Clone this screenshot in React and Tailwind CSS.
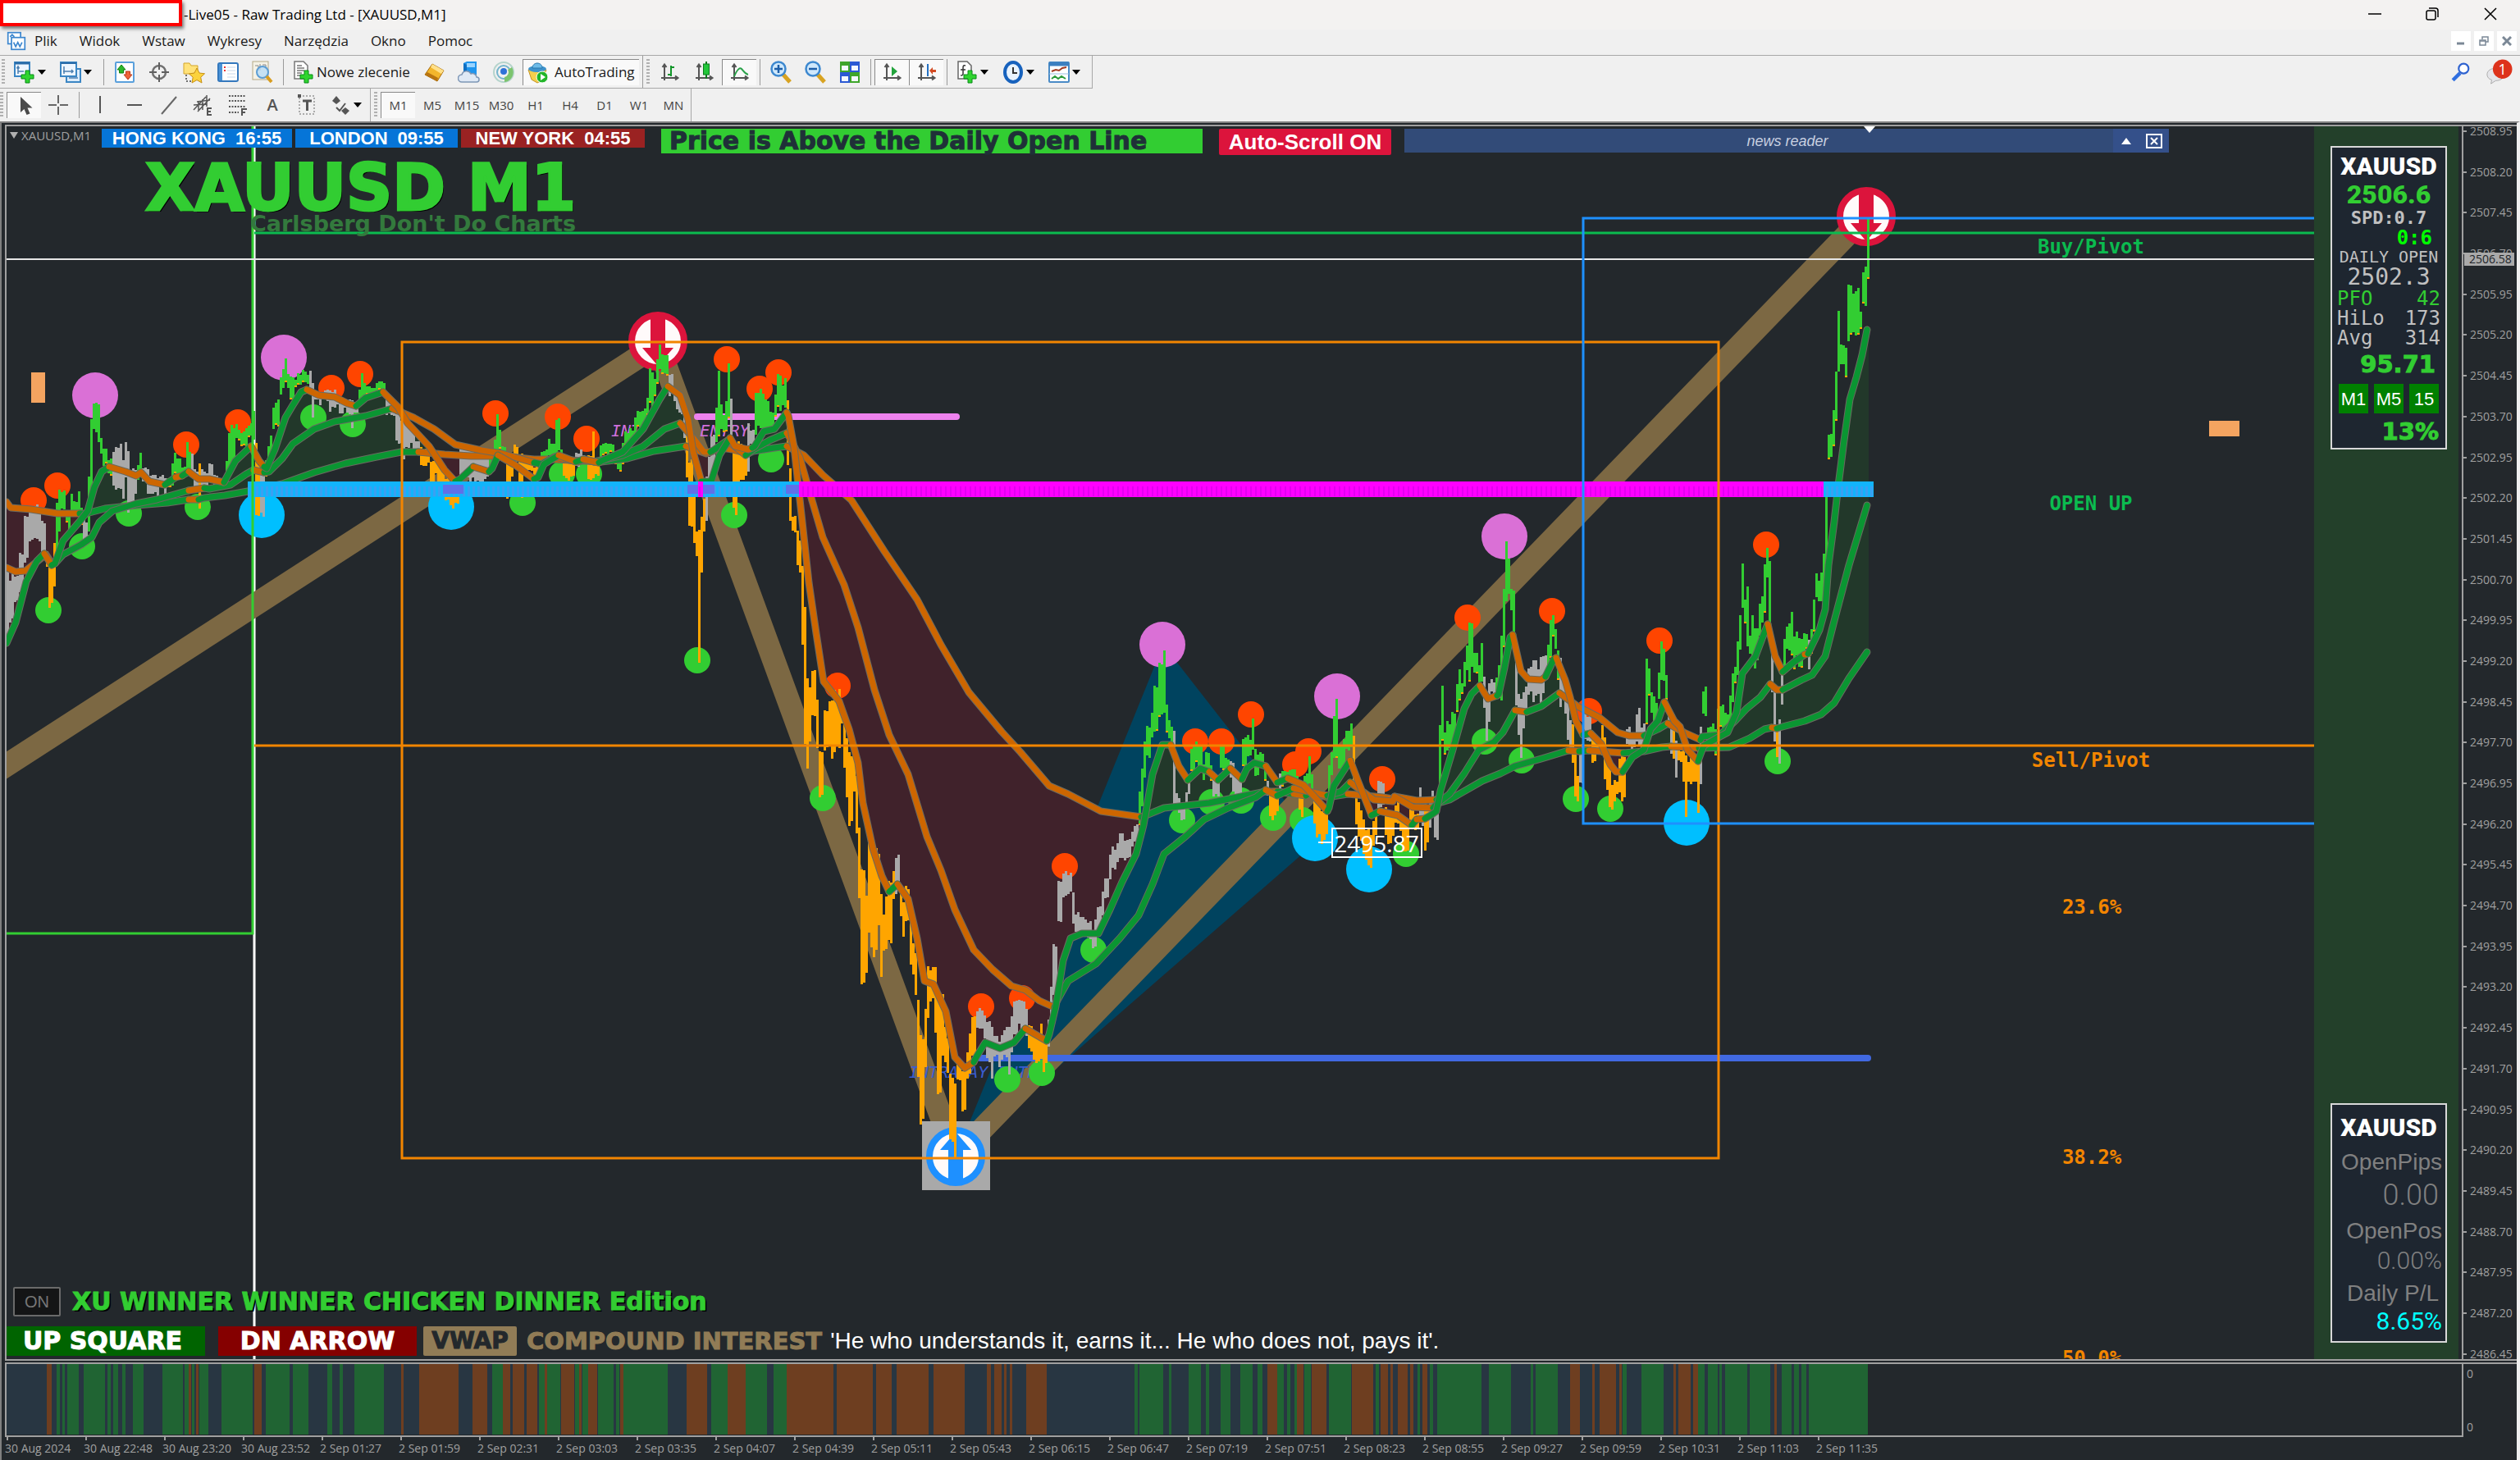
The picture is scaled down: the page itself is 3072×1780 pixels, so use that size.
import React from "react";

/* ------------------------------------------------------------------ data */

const COLORS = { w: "#a9a9a9", o: "#ffa500", g: "#32cd32" };
const MA_COLORS = { o: "#cd6600", g: "#0a9632" };

// Each session block has its own origin and unit size: [x0, y0, x unit, y unit]
const BLOCKS = {
  A: [0, 380, 0.6378, 0.3571],
  B: [900, 400, 0.574, 0.6888],
  C: [1700, 600, 0.4464, 0.3571],
  D: [1300, 140, 1.13, 0.3333],
};

function parse(rows) {
  const out = [];
  rows.forEach(([block, text]) => {
    const [x0, y0, sx, sy] = BLOCKS[block];
    let tone = "g";
    text
      .trim()
      .split(/\s+/)
      .forEach((token) => {
        if (/^[wog]$/.test(token)) {
          tone = token;
          return;
        }
        const [x, ...ys] = token.split(",").map(Number);
        out.push([x0 + x * sx, ...ys.map((y) => y0 + y * sy), tone]);
      });
  });
  return out;
}

const PRICE_BARS = parse([
  ["A", `w 12,880,1120 22,900,1060 30,900,990 38,820,960 48,700,860 54,680,800 62,650,780 70,660,790 78,700,830 84,720,850
    o 88,810,880 92,850,1025 97,860,1010 101,790,935 104,860,900
    g 108,640,860 112,600,770 118,610,680 124,680,720 130,690,740 136,620,690 142,650,700 148,610,700 153,660,730
    w 156,690,780 160,680,790 164,720,800
    g 168,560,760 172,370,620 177,310,400 181,295,410 185,300,460 190,430,490 196,460,530 202,465,520 208,500,560
    w 213,480,600 220,450,620 226,450,600 232,500,650 238,450,580 244,480,690 250,540,660 256,530,630
    g 262,520,580 267,480,550 w 272,530,580 280,540,620 290,560,620 300,570,630 308,560,600 314,570,630
    g 320,570,600 328,520,590 334,480,560 340,500,560 348,530,560 355,450,560 360,480,550
    w 365,480,560 372,540,600 o 378,520,670 w 386,540,600 394,550,600 402,520,580 410,560,600 420,570,600 427,570,590
    g 430,500,570 436,400,540 444,390,530 450,380,430 455,400,440 460,410,460 466,400,460 472,390,430 478,380,420 482,340,450
    o 488,430,690 493,530,690 w 500,540,700
    g 505,500,560 510,460,530 516,420,490 522,320,400 528,300,390 534,220,290 540,200,260 544,165,240 550,210,260 556,220,300 562,230,260 570,210,250 580,200,245 586,210,250
    w 590,205,280 596,250,360 602,280,300 610,280,320 618,270,300 624,265,310 630,260,340 636,270,330 642,285,320 650,310,350 658,300,330 665,300,350 672,300,400 678,310,350
    g 684,260,320 690,215,300 696,240,290 702,250,285 710,260,280 718,240,270 726,240,265 732,240,270
    w 738,280,350 745,300,355 752,330,360 758,350,450 764,360,460 770,370,500 776,390,460 784,400,450 790,410,470 796,440,480
    o 802,460,530 810,470,530 818,480,520 824,500,600 832,500,560 838,520,590 845,540,600 852,560,650 858,600,660 865,630,675 872,600,660
    w 878,470,560 884,455,560 892,440,570 898,470,580 906,480,600 914,480,590 922,490,580 930,500,570
    g 938,490,550 944,440,540 948,345,480 954,400,470 960,460,500
    o 966,520,655 972,500,600 978,490,560 984,455,520 990,480,640 996,480,630 1003,500,560 1010,490,550 1020,530,560 1028,530,570
    g 1034,480,540 1040,470,520 1048,430,500 1055,450,500 1064,360,480 1070,470,500
    o 1075,490,570 1082,500,575 1090,510,570 1096,500,560 w 1100,480,530 1108,470,510 1116,490,520
    o 1125,490,580 1131,400,580 1138,500,560
    g 1146,450,520 1152,450,490 1160,450,500 1168,450,480 1174,480,520 1182,470,545 1190,440,520 1196,410,460 1204,400,450 1212,350,430 1218,330,400 1224,340,400 1230,330,390 1236,290,350 1243,200,320 1248,220,290 1254,150,260 1260,110,200 1266,150,215 1272,145,220
    w 1280,210,290 1286,270,310 1292,280,340 1298,290,350 1306,300,450
    o 1312,400,560 1318,500,740 1324,620,790 1328,720,830 1330,750,830 1334,750,1195 1338,700,890 1344,640,760
    w 1350,560,720 1354,480,620 1360,420,560
    g 1366,330,460 1370,200,420 1376,310,400 1382,350,420 1386,290,410 1390,165,360 w 1394,290,440
    o 1399,470,680 1404,440,700 1410,450,600 1418,450,590 1424,460,560 w 1430,380,540 1436,400,460
    g 1444,270,420 1450,265,400 1458,280,400 1464,290,410 1472,340,400 1480,280,370 1488,210,340 1494,240,330 1500,230,330`],
  ["B", `o 105,130,240 110,240,350 116,330,360 122,350,420 128,370,430 134,420,560 138,490,740 144,620,790 148,630,740 152,650,760 158,600,690 164,650,740 170,740,830 178,750,835 184,670,750 190,660,740 198,650,760 204,640,750 211,635,740 216,660,700 222,680,780 228,720,830 236,750,880 244,760,820 250,790,900 256,880,1010 262,960,1160 268,1000,1150 274,900,1070 280,910,1100 288,920,1110 294,930,1060 300,1000,1150 306,1030,1100 314,1000,1100 320,980,1090 326,960,1010
    w 332,930,1000 336,930,990
    o 342,990,1040 348,1010,1075 356,990,1050 364,1040,1130 370,1080,1150 376,1100,1180 382,1180,1330 388,1250,1410 394,1200,1310 400,1130,1230 406,1130,1190 412,1130,1190 418,1130,1250 424,1180,1360 430,1170,1290 436,1240,1300 442,1260,1320 448,1320,1440 454,1330,1440 460,1330,1465 466,1300,1330 472,1310,1395 478,1300,1390 484,1280,1330 490,1250,1330 498,1220,1290
    w 504,1210,1240 510,1205,1240 516,1205,1240 522,1215,1260 530,1220,1300 538,1240,1330 544,1250,1290 552,1260,1310 558,1250,1300 566,1240,1290 572,1230,1330 578,1210,1280 586,1190,1250 594,1190,1230 602,1185,1240 610,1205,1250
    o 618,1230,1280 624,1250,1300 632,1250,1300 640,1230,1300 646,1260,1320 652,1260,1300
    w 658,1220,1270 664,1170,1240 670,1090,1180 675,1040,1100 680,970,1050 686,960,1010 692,955,1010 698,970,1000 704,965,1000 710,1000,1060 718,1035,1070 726,1040,1070 734,1045,1070 742,1050,1080 750,1060,1100 756,1050,1100 764,1020,1060 772,990,1040 780,970,1010 788,930,980 796,920,960 804,910,950 810,890,940 818,905,940 826,905,940 834,890,920 842,880,910
    g 850,820,880 856,770,850 862,730,800 868,700,760 876,680,730 882,625,710 888,640,710 894,590,690 901,565,690 906,660,720 912,690,730 918,700,750
    w 922,710,850 928,820,850 936,830,860 942,840,870 948,820,850 956,790,830
    g 962,740,790 970,730,770 978,735,780 986,770,800 994,750,790 1000,770,800
    w 1006,780,830 1012,790,830 1018,800,830 g 1024,735,780 1030,730,790 1036,760,790 w 1042,765,800 1048,770,820 1056,790,830 1064,800,840
    g 1072,725,780 1078,720,760 1084,730,760 1089,685,750 1096,740,790 1102,750,790 1110,750,780 1118,770,800
    w 1124,800,830 o 1130,810,870 1136,820,870 1142,820,860 w 1146,790,820
    g 1152,785,810 1160,785,800 1168,780,800 1176,780,810 1184,790,820
    o 1190,810,850 1196,820,870 g 1203,790,830 1209,750,810 1214,790,820
    o 1220,820,880 1226,840,910 1232,840,900 1240,850,910 1248,850,900
    g 1254,770,840 1260,750,790 1264,690,770 1271,655,770 1276,740,780 1284,730,780 1292,710,750 1298,700,740
    o 1302,720,820 1308,820,880 1314,840,900 1320,850,910 1328,860,940 1334,880,950 1340,900,960 1348,870,920 1354,860,900
    w 1360,800,850 1366,800,850 o 1372,840,900 1380,860,910 1388,860,900 1396,840,880 1404,860,890 1412,870,930 1420,880,930 1430,840,890 1438,860,890
    w 1446,810,870 1452,830,880 o 1460,840,920 w 1466,840,890 1474,815,870 1480,840,905`],
  ["C", `g 118,790,1000 126,665,840 132,820,900 138,780,890 146,780,870 152,750,850 160,750,840 168,640,760 174,590,720 180,650,690 188,580,660 194,515,620 200,430,640 206,430,610 212,540,610 218,540,620 226,590,660 234,515,640
    w 240,620,740 246,690,850 252,710,860 258,650,780 264,630,690 270,650,690
    g 276,630,700 282,590,700 288,490,720 294,320,530 300,160,380 306,220,330 312,230,360 318,320,400 322,320,520
    w 328,500,730 334,690,830 340,700,900 346,700,910 352,680,800 358,660,760 366,600,690 372,600,680 380,580,710 388,600,700 396,570,720 404,560,680 410,560,620
    g 416,510,600 422,440,560 429,410,500 436,460,540 442,530,650
    w 448,550,740 454,600,700 460,640,760 468,700,850 474,780,880 o 482,780,930 488,890,1050 494,960,1055 500,970,1050
    w 508,860,1000 514,810,900 520,750,840 528,760,850 534,770,830
    o 540,830,930 546,840,920 554,840,880 562,790,900 568,830,1000 576,900,1010 582,950,1070 590,990,1085 598,980,1060 604,980,1040 610,900,1030 618,890,1050 624,900,1050
    w 630,800,870 636,790,870 644,840,880 650,830,870 658,760,860 664,740,870 670,800,870 676,790,850
    g 684,560,790 690,590,710 696,680,760 702,700,800 710,720,800 718,600,720 725,515,640 731,530,640 738,610,720
    w 744,730,800 750,800,900 756,780,860 o 762,810,920 w 768,850,970
    o 776,880,920 784,880,1000 790,890,1100 796,900,1125 802,910,1000 810,900,1000 818,900,990 825,880,1110
    w 832,800,1010 g 838,680,760 845,660,760 850,740,830 856,800,850 866,790,830 874,800,900 882,730,820 890,720,800 898,750,820 906,760,820 914,680,800 920,610,720 928,590,650 934,510,620 940,410,540 946,225,400 952,370,460 960,310,540 966,480,550 974,415,560 980,450,620 986,470,580 994,380,500 1000,340,450 1006,250,430 1013,185,290 1019,230,460
    w 1025,400,580 1031,550,700 1036,640,850 o 1041,780,920 w 1046,760,925 1052,660,850 1058,620,730
    g 1065,500,610 1072,450,540 1080,400,550 1087,500,620 1094,470,560 1102,490,590 1110,500,600 1118,480,560 1124,480,540 w 1130,500,610
    g 1136,470,560 1142,350,480 1148,280,360 1154,290,380 1160,270,370 1166,260,330 1172,200,400 1176,-20,260`],
  ["D", `g 822,1160,1260 826,1070,1210 829,920,1130 833,700,960 836,840,910 840,850,960 844,620,820 848,650,790 852,630,800 856,720,780 860,560,700 863,380,590`],
]);

const SLOW = parse([
  ["A", `o 12,650 20,668 60,675 110,690 152,688 g 165,690 200,672 260,660 320,652 360,642 o 380,640 g 390,635 430,628 500,605 540,588 600,550 660,518 720,495 767,480 800,478
    o 850,487 900,493 960,492 1020,505 1060,503 1150,512 g 1200,500 1250,475 1310,458 o 1350,485 1370,470 g 1380,465 o 1400,470 1430,485 g 1440,475 1480,465 1503,460`],
  ["B", `o 110,212 140,225 180,260 240,305 310,395 380,480 430,560 490,645 560,715 600,750 660,810 700,825 770,855 855,865 g 865,862 905,850 1000,840 1060,830 1120,820 o 1145,820 g 1180,825 o 1205,828 g 1215,822 o 1250,830 g 1295,825 o 1370,830 1390,834`],
  ["C", `o 0,1040 60,1052 115,1050 g 120,1060 150,1050 240,985 290,960 330,935 400,910 475,882 o 505,885 g 530,882 o 625,890 g 680,885 730,872 755,868 o 830,875 g 915,870 970,840 1010,810 1030,805 o 1045,806 g 1060,802 1120,780 1165,760 1200,720 1240,635 1290,545`],
]);

const MEDIUM = parse([
  ["A", `o 12,875 30,888 48,885 88,830 98,860 g 105,860 120,830 155,795 175,770 190,720 215,680 260,655 300,640 360,610 o 390,603 g 400,605 440,590 470,555 485,540 o 505,548 g 515,545 540,500 560,450 600,400 640,375 700,355 750,330
    o 790,360 830,400 870,455 920,472 960,485 1020,515 g 1035,520 1060,495 o 1105,512 g 1120,505 o 1135,512 g 1150,508 1190,490 1230,460 1270,400 1300,380 o 1325,430 1345,480 1358,478 g 1365,470 1390,440 o 1398,450 1425,490 g 1440,470 1470,440 1503,415`],
  ["B", `o 110,195 130,230 155,300 180,370 225,455 255,530 290,640 320,720 360,790 400,900 430,960 460,1030 500,1100 540,1135 580,1165 610,1172 640,1190 670,1202 g 675,1195 700,1155 760,1125 810,1080 850,1040 880,985 905,930 950,900 990,870 1040,850 1100,830 1120,818 o 1145,828 g 1180,815 o 1250,828 g 1280,820 1300,805 o 1350,835 1390,838`],
  ["C", `o 0,1040 50,1075 105,1078 g 118,1060 150,1030 190,960 230,880 270,855 295,820 330,745 o 360,750 g 400,730 450,685 o 500,730 560,770 610,820 640,832 680,832 g 720,810 745,790 o 790,820 835,845 g 840,835 890,830 930,780 960,740 1000,700 1025,655 o 1045,675 1060,675 g 1110,640 1140,625 1175,560 1200,440 1240,250 1290,45`],
]);

const FAST = parse([
  ["A", `g 12,1130 30,1060 50,920 70,850 85,825 o 98,865 g 105,860 120,780 150,720 168,680 180,600 195,545 208,530 o 240,545 260,560 270,550 285,580 315,592 g 335,565 o 348,560 g 360,545 o 380,570 400,570 428,582 g 450,510 480,460 o 495,510 505,530 g 510,535 525,470 545,360 560,320 575,275 587,265
    o 610,285 640,290 665,315 680,322 g 700,295 732,275 o 760,325 780,380 820,460 850,540 870,580 g 880,570 905,530 o 935,545 g 940,535 952,490 o 985,525 1020,570 g 1028,565 1040,520 1068,490 o 1100,512 g 1115,505 o 1145,515 g 1150,510 1190,480 1230,400 1260,300 1277,255
    o 1300,285 1315,370 1325,480 1340,580 g 1360,580 1375,490 1395,430 o 1405,460 1430,470 1438,465 g 1442,460 1460,410 1480,400 1503,345`],
  ["B", `o 107,155 118,210 135,330 150,450 165,540 182,625 215,660 235,710 255,770 265,840 285,920 305,970 320,998 g 338,985 o 360,1010 380,1080 395,1155 415,1162 440,1210 460,1290 480,1310 500,1300 g 505,1290 525,1265 555,1275 585,1265 610,1240 o 655,1262 g 660,1250 675,1200 690,1120 705,1080 730,1072 765,1072 790,1030 815,980 845,930 860,880 880,790 900,738 918,738
    o 935,775 955,800 g 980,780 1000,785 o 1020,800 g 1045,780 o 1070,798 g 1080,780 1095,770 1120,775 o 1145,805 g 1168,797 o 1200,808 1225,830 1250,855 g 1255,850 1265,810 1300,765 o 1315,800 1345,862 g 1362,855 o 1400,862 1430,880 g 1440,870 o 1458,868 g 1470,862 1483,855`],
  ["C", `g 125,1020 160,880 190,740 210,690 233,660 o 255,705 280,695 g 285,690 300,600 315,495 322,487 o 345,610 365,638 400,640 412,630 g 435,570 442,565 o 465,640 480,700 495,780 515,830 g 535,822 o 565,860 590,930 605,955 622,955 g 650,905 680,880 700,810 720,780 738,718 o 765,780 780,800 800,880 828,918
    g 832,910 845,865 880,840 910,820 935,750 950,620 985,560 1010,480 1020,450 o 1040,560 1060,612 g 1090,580 1120,555 o 1128,551 g 1160,470 1175,400 1185,250 1200,100 1210,0`],
  ["D", `g 839,1190 845,1040 852,960 858,880 864,785`],
]);

const noise = (i) => {
  const v = Math.sin(i * 12.9898) * 43758.5453;
  return v - Math.floor(v);
};

function buildBars() {
  const paths = { w: "", o: "", g: "" };
  let sparks = "";
  let k = 0;
  for (let x = 8, i = 0; x <= 2276; x += 3, i += 1) {
    while (k < PRICE_BARS.length - 2 && PRICE_BARS[k + 1][0] < x) k += 1;
    const a = PRICE_BARS[k];
    const b = PRICE_BARS[k + 1];
    const near = Math.abs(a[0] - x) < Math.abs(b[0] - x) ? a : b;
    const h = near[2] - near[1];
    const amp = Math.min(h * 0.2, 10);
    const top = Math.round(near[1] + amp * (noise(i) - 0.3));
    const bottom = Math.round(near[2] - amp * (noise(i + 900) - 0.3));
    paths[near[3]] += `M${x} ${top}h3V${bottom}h-3z`;
    if (near[3] === "g" && noise(i + 77) > 0.5) sparks += `M${x} ${bottom - 2}h3v2h-3z`;
  }
  return { paths, sparks };
}

function valueAt(line, x) {
  for (let i = 1; i < line.length; i += 1) {
    if (line[i][0] >= x) {
      const a = line[i - 1];
      const b = line[i];
      const t = Math.max(0, (x - a[0]) / (b[0] - a[0] || 1));
      return a[1] + (b[1] - a[1]) * t;
    }
  }
  return line[line.length - 1][1];
}

function buildCloud() {
  let up = "";
  let down = "";
  for (let x = 8; x <= 2276; x += 2) {
    const f = Math.round(valueAt(FAST, x));
    const s = Math.round(valueAt(SLOW, x));
    if (f < s) up += `M${x} ${f}h2V${s}h-2z`;
    else down += `M${x} ${s}h2V${f}h-2z`;
  }
  return { up, down };
}

function buildSegments(line) {
  const out = [];
  let current = null;
  line.forEach(([x, y, tone], i) => {
    const p = `${Math.round(x)} ${Math.round(y)}`;
    if (!current || current.tone !== tone) {
      const prev = i > 0 ? line[i - 1] : null;
      current = { tone, d: prev ? `M${Math.round(prev[0])} ${Math.round(prev[1])}L${p}` : `M${p}` };
      out.push(current);
    } else current.d += `L${p}`;
  });
  return out;
}

const BARS = buildBars();
const CLOUD = buildCloud();
const AVERAGES = [SLOW, MEDIUM, FAST].map(buildSegments);

const BIG_HIGHS = [[116, 482], [346, 436], [1417, 786], [1630, 849], [1834, 654]];
const BIG_LOWS = [[319, 628], [550, 618], [1603, 1022], [1669, 1060], [2056, 1003]];
const HIGHS = [[41, 610], [70, 592], [227, 542], [290, 515], [404, 473], [439, 456], [604, 504], [680, 508], [715, 535], [886, 438], [926, 474], [949, 454], [1021, 836], [1196, 1227], [1246, 1217], [1298, 1056], [1457, 904], [1489, 904], [1525, 871], [1579, 932], [1595, 916], [1685, 950], [1789, 753], [1892, 745], [1937, 867], [2023, 781], [2153, 664]];
const LOWS = [[59, 744], [100, 666], [157, 626], [241, 618], [382, 509], [430, 517], [637, 613], [685, 578], [718, 578], [850, 805], [895, 628], [940, 560], [1003, 973], [1228, 1316], [1270, 1308], [1333, 1158], [1441, 1000], [1477, 978], [1513, 976], [1552, 997], [1588, 1000], [1714, 1041], [1810, 904], [1855, 927], [1921, 974], [1963, 986], [2167, 928]];

const PRICE_LABELS = Array.from({ length: 31 }, (_, i) => (2508.95 - i * 0.75).toFixed(2));

const TIME_LABELS = ["30 Aug 2024", "30 Aug 22:48", "30 Aug 23:20", "30 Aug 23:52", "2 Sep 01:27", "2 Sep 01:59", "2 Sep 02:31", "2 Sep 03:03", "2 Sep 03:35", "2 Sep 04:07", "2 Sep 04:39", "2 Sep 05:11", "2 Sep 05:43", "2 Sep 06:15", "2 Sep 06:47", "2 Sep 07:19", "2 Sep 07:51", "2 Sep 08:23", "2 Sep 08:55", "2 Sep 09:27", "2 Sep 09:59", "2 Sep 10:31", "2 Sep 11:03", "2 Sep 11:35"];

const TREND_EARLY = "b58-64 g70-74 g78-81 g84-98 g104-131 g134-138 g141-147 g152-156 g165-178 g202-227 g230-235 b235-238 g239-242 b244-247 g248-259 g276-315 b316-325 g331-361 g364-383 g407-413 g422-426 g441-478 b499-502 b521-570 b588-606 g612-625 b626-635 b638-652 b655-668 g670-677 b678-680 g681-697 b698-714 g715-720 b720-722 g724-731 b732-743 g744-763 g766-770 b771-775 g775-830 b854-879 g885-905 b905-928 g928-955 g962-979 b979-1037 b1041-1086 b1090-1109 b1115-1155 b1161-1200 b1228-1233 b1237-1246 b1249-1252 b1256-1259 b1277-1302";
const TREND_LATE = "g118-123 g127-169 g178-182 g212-234 g242-247 g268-285 g302-324 g332-341 b349-366 g367-379 g383-388 g396-401 b401-413 g414-425 b426-452 g456-495 b496-533 g537-542 b546-559 b563-567 b576-593 b597-602 g610-614 b619-628 g631-636 g644-721 g734-773 g807-811 g815-854 b875-892 b914-918 b927-956 b961-965 g967-974 g999-1038 b1055-1059 b1063-1085 b1089-1098 g1098-1110 g1115-1132 g1135-1139 g1145-1183 g1187-1222 b1230-1234 g1243-1260 g1264-1273 g1277-1286 g1290-1393";

const readTrend = (text, x0, unit) =>
  text.split(" ").map((t) => {
    const [a, b] = t.slice(1).split("-").map(Number);
    return { tone: t[0], x: Math.round(x0 + a * unit), w: Math.max(3, Math.round((b - a) * unit)) };
  });
const TREND = [...readTrend(TREND_EARLY, 0, 0.98), ...readTrend(TREND_LATE, 1300, 0.7015)];

/* ----------------------------------------------------------------- icons */

const Icon = ({ children }) => (
  <svg viewBox="0 0 28 28" className="size-7 shrink-0" fill="none" aria-hidden="true">
    {children}
  </svg>
);
const Plus = () => <path d="M15 12h5v5h5v5h-5v5h-5v-5h-5v-5h5z" fill="#2fd42f" stroke="#078a17" />;
const Axes = () => <path d="M7 5v19M3 21h20M4.500 8 7 4.500 9.500 8M20 18.500 23.500 21 20 23.500" stroke="#555" strokeWidth="2" />;

const icons = {
  newChart: <Icon><rect x="2" y="2" width="18" height="17" fill="#eef6ff" stroke="#3b86c4" strokeWidth="2" /><path d="M2 3h18" stroke="#2a6ca8" strokeWidth="3" /><path d="M6 8v8M6 13h7M4.500 9.500 6 7l1.500 2.500" stroke="#4c7fb0" strokeWidth="1.500" /><Plus /></Icon>,
  profiles: <Icon><rect x="9" y="10" width="17" height="16" fill="#dcecfb" stroke="#3b86c4" strokeWidth="2" /><path d="M12 21h11" stroke="#4c7fb0" strokeWidth="1.500" /><rect x="2" y="2" width="19" height="17" fill="#eef6ff" stroke="#3b86c4" strokeWidth="2" /><path d="M2 3h19" stroke="#2a6ca8" strokeWidth="2" /><path d="M6 7v9M5 13h12M15 11l2 2-2 2" stroke="#4c7fb0" strokeWidth="1.500" /></Icon>,
  market: <Icon><rect x="3" y="2" width="22" height="24" rx="1" fill="#fff" stroke="#5aa0dc" strokeWidth="2" /><path d="M10 5l5 6h-2.500v4h-5v-4H5z" fill="#2cb82c" stroke="#128212" /><path d="M18 23l5-6h-2.500v-4h-5v4H13z" fill="#f0643a" stroke="#b83a18" /></Icon>,
  target: <Icon><circle cx="14" cy="14" r="8" stroke="#707070" strokeWidth="2.500" /><path d="M14 2v9M14 17v9M2 14h9M17 14h9" stroke="#606060" strokeWidth="2" /></Icon>,
  navigator: <Icon><path d="M2 3h7l2 3h8v10H2z" fill="#ffe27a" stroke="#d3a52a" /><path d="M5 17v8h6" stroke="#444" strokeWidth="1.500" strokeDasharray="2 2" /><path d="M18 9l3 6 6.500.8-4.800 4.400L24 27l-6-3.500L12 27l1.200-6.800L8.500 16l6.500-1z" fill="#fbd23c" stroke="#c78f13" /></Icon>,
  terminal: <Icon><rect x="2" y="3" width="24" height="22" rx="2" fill="#fff" stroke="#3478bd" strokeWidth="2" /><path d="M3 4h4v20H3z" fill="#4a92d6" /><path d="M9 8h2M9 12h2" stroke="#e33" strokeWidth="2" /><path d="M13 8h10M13 12h10M13 16h10M13 20h10" stroke="#c9d8ea" /></Icon>,
  tester: <Icon><rect x="2" y="1" width="19" height="22" fill="#f5f2e6" stroke="#b5a985" /><path d="M5 6h4v6M11 4v8M14 5h4v5" stroke="#8a8a8a" /><circle cx="14" cy="14" r="7" fill="#b9dcf6cc" stroke="#5b9dd4" strokeWidth="2" /><path d="M19 19l6 7" stroke="#d89d20" strokeWidth="4" /></Icon>,
  order: <Icon><path d="M3 1h11l5 5v16H3z" fill="#fff" stroke="#777" strokeWidth="1.500" /><path d="M6 6h6M6 9h9M6 12h9M6 15h6M6 18h5" stroke="#777" strokeWidth="1.500" /><Plus /></Icon>,
  book: <Icon><path d="M2 17 11 4l14 8-8 13z" fill="#f3b62c" stroke="#a56a0c" /><path d="M2 17l15 8 1-4L5 14z" fill="#b87411" /><path d="M11 4l14 8-3 4L9 8z" fill="#ffe08a" /></Icon>,
  cloud: <Icon><path d="M7 3l4-2h12v16H7z" fill="#1f95ee" /><path d="M11 3h10v5H11z" fill="#9ad4ff" /><path d="M7 3l4 2v13l-4-1z" fill="#0f6fc2" /><path d="M5 26a4.500 4.500 0 0 1 0-9 6 6 0 0 1 11-1 5 5 0 0 1 7 4 3 3 0 0 1 0 6z" fill="#dfe9f5" stroke="#7d96b5" strokeWidth="1.500" /></Icon>,
  signal: <Icon><circle cx="14" cy="14" r="12" stroke="#b5d4cc" strokeWidth="2" /><circle cx="14" cy="14" r="8" stroke="#74b4cc" strokeWidth="2" /><path d="M15 26a12 12 0 0 0 9-18l-5 3a6 6 0 0 1-4 9z" fill="#7cc46e" /><circle cx="14" cy="13" r="4" fill="#2f72d8" /></Icon>,
  robot: <Icon><path d="M2 11h22l-5 13-6 3-7-4z" fill="#f4cf4c" stroke="#c5952a" /><ellipse cx="13" cy="10" rx="11" ry="4" fill="#3e93cc" /><path d="M7 9c0-8 12-8 12 0z" fill="#6dbbe8" stroke="#2b78ad" /><circle cx="19" cy="20" r="7" fill="#21b528" stroke="#fff" /><path d="M17 16v8l6-4z" fill="#fff" /></Icon>,
  barChart: <Icon><Axes /><path d="M15 6v13M15 8h4M11 17h4" stroke="#12962a" strokeWidth="2" /></Icon>,
  candles: <Icon><Axes /><path d="M16 1v21" stroke="#0d7a1e" strokeWidth="2" /><rect x="12.500" y="4" width="7" height="13" fill="#22c73a" stroke="#0d7a1e" /></Icon>,
  lineChart: <Icon><Axes /><path d="M7 19c4-9 7-11 9-9s4 6 8 7" stroke="#2ba14a" strokeWidth="2" /></Icon>,
  zoomIn: <Icon><path d="M16 16l9 10" stroke="#d8a321" strokeWidth="5" /><circle cx="11" cy="10" r="8.500" fill="#cfe8fb" stroke="#3d88cf" strokeWidth="2.500" /><path d="M11 5v10M6 10h10" stroke="#1d5ea8" strokeWidth="2.500" /></Icon>,
  zoomOut: <Icon><path d="M16 16l9 10" stroke="#d8a321" strokeWidth="5" /><circle cx="11" cy="10" r="8.500" fill="#cfe8fb" stroke="#3d88cf" strokeWidth="2.500" /><path d="M6 10h10" stroke="#1d5ea8" strokeWidth="2.500" /></Icon>,
  tile: <Icon><path d="M2 1h12v13H2z" fill="#3fa52a" /><path d="M14 1h12v13H14z" fill="#2b59d4" /><path d="M2 14h12v13H2z" fill="#2b59d4" /><path d="M14 14h12v13H14z" fill="#3fa52a" /><path d="M4 6h8v6H4zM16 6h8v6h-8zM4 19h8v6H4zM16 19h8v6h-8z" fill="#f4f8ff" /></Icon>,
  autoScroll: <Icon><Axes /><path d="M13 7v12l7-6z" fill="#22a33c" /></Icon>,
  shift: <Icon><Axes /><path d="M15 4v15" stroke="#2470c2" strokeWidth="2" /><path d="M17 12l4-4v3h4v3h-4v3z" fill="#d24a22" /></Icon>,
  indicator: <Icon><path d="M3 1h11l5 5v16H3z" fill="#fff" stroke="#666" strokeWidth="1.500" /><path d="M12 6c-3-1-3 1-3 3v7c0 2-1 2-3 2M6 11h6" stroke="#333" strokeWidth="1.500" /><Plus /></Icon>,
  clock: <Icon><ellipse cx="14" cy="14" rx="10" ry="12" fill="#e9f3fd" stroke="#1762bd" strokeWidth="4" /><path d="M14 8v7h5" stroke="#333" strokeWidth="2" /></Icon>,
  template: <Icon><rect x="2" y="2" width="24" height="24" rx="1" fill="#fff" stroke="#4a8bc6" strokeWidth="2" /><path d="M2 4h24" stroke="#3c7fc0" strokeWidth="5" /><path d="M5 13l5-2 4 1 4-3 5-1" stroke="#a33b22" strokeWidth="2" /><path d="M2 16h24" stroke="#9bc0e2" /><path d="M5 22l4-3 4 3 4-3 5 3" stroke="#2c9a3b" strokeWidth="2" /></Icon>,
  cursor: <Icon><path d="M9 3v19l4.500-4 3 7 4-1.500-3-7h6z" fill="#4a4a4a" /></Icon>,
  cross: <Icon><path d="M14 2v10M14 16v10M2 14h10M16 14h10" stroke="#666" strokeWidth="2" /></Icon>,
  vline: <Icon><path d="M14 3v21" stroke="#555" strokeWidth="2" /></Icon>,
  hline: <Icon><path d="M5 14h18" stroke="#555" strokeWidth="2" /></Icon>,
  diagonal: <Icon><path d="M5 25 23 4" stroke="#666" strokeWidth="2" /></Icon>,
  channel: <Icon><path d="M2 20 17 4M7 22 22 6M2 14l16-1M6 10l16-2M8 20V9M13 20V7M18 16V2" stroke="#555" strokeWidth="1.500" /><path d="M24 18h-5v8h5M19 22h4" stroke="#555" strokeWidth="2" /></Icon>,
  fibo: <Icon><path d="M3 3h20M3 9h20M3 16h20M3 23h12" stroke="#555" strokeWidth="2" strokeDasharray="2 1.500" /><path d="M19 27v-8h6M19 23h4" stroke="#555" strokeWidth="2" /></Icon>,
  textBox: <Icon><rect x="5" y="3" width="18" height="22" stroke="#666" strokeDasharray="2 2" /><path d="M9 9h11M14.500 9v12" stroke="#555" strokeWidth="3" /><path d="M3 1h4v4H3z" fill="#555" /></Icon>,
  arrows: <Icon><path d="M9 3l5 6-5 4-5-4z" fill="#555" /><path d="M9 17l4 4 7-9" stroke="#555" strokeWidth="2" /><path d="M20 17l5 4-5 5-5-5z" fill="#555" /></Icon>,
};

/* --------------------------------------------------------------- toolbar */

const Caret = () => <span className="h-0 w-0 border-x-5 border-t-6 border-x-transparent border-t-black" />;
const Grip = () => <span className="mx-1 h-8 w-1 shrink-0 bg-[repeating-linear-gradient(to_bottom,#b0b0b0_0_2px,#f0f0f0_2px_4px)]" />;
const Divider = () => <span className="mx-1 h-8 w-px shrink-0 bg-[#9a9a9a]" />;

const Tool = ({ icon, label, active, menu }) => (
  <button
    type="button"
    aria-label={label}
    className={`flex h-8 shrink-0 items-center ${menu ? "w-14 pl-1.5" : "w-[42px] justify-center"} ${active ? "border-t border-l border-[#8a8a8a] bg-[#f9f9f9]" : ""}`}
  >
    {icons[icon]}
    {menu && <span className="ml-0.5 flex"><Caret /></span>}
  </button>
);

function Header() {
  return (
    <header className="bg-[#f0f0f0] font-['Open_Sans','Noto_Sans',sans-serif] text-[17px] text-[#1a1a1a]">
      <div className="flex h-9 items-center bg-[#f3f2f1]">
        <span className="mb-1 h-8 w-[222px] border-4 border-[#fe0000] bg-white shadow-[2px_3px_4px_#777]" />
        <span className="pl-0.5 text-[17px] leading-6 text-black">-Live05 - Raw Trading Ltd - [XAUUSD,M1]</span>
        <div className="ml-auto flex items-center pb-0.5">
          <button type="button" aria-label="Minimize" className="flex w-[70px] justify-center"><svg viewBox="0 0 16 16" className="size-4"><path d="M0 8h16" stroke="#000" strokeWidth="1.500" /></svg></button>
          <button type="button" aria-label="Restore" className="flex w-[70px] justify-center"><svg viewBox="0 0 16 16" className="size-4" fill="none" stroke="#000" strokeWidth="1.500"><rect x="1" y="4" width="11" height="11" rx="2" /><path d="M4 1h8a3 3 0 0 1 3 3v8" /></svg></button>
          <button type="button" aria-label="Close" className="flex w-[72px] justify-center"><svg viewBox="0 0 16 16" className="size-4"><path d="M1 1l14 14M15 1 1 15" stroke="#000" strokeWidth="1.500" /></svg></button>
        </div>
      </div>
      <div className="flex h-8 items-center border-b border-[#a8a8a8] pb-1">
        <svg viewBox="0 0 28 28" className="mr-2.5 ml-2 size-6" fill="#fff" stroke="#3d87cf" strokeWidth="2" aria-hidden="true"><rect x="2" y="2" width="18" height="16" /><rect x="7" y="9" width="19" height="17" /><path d="M10 16l3 6 3-6 3 6 3-6M5 8l3-3 3 3" fill="none" /></svg>
        <nav className="flex gap-[27px]">
          {["Plik", "Widok", "Wstaw", "Wykresy", "Narzędzia", "Okno", "Pomoc"].map((m) => (
            <button type="button" key={m}>{m}</button>
          ))}
        </nav>
        <div className="ml-auto flex gap-1 pr-1">
          <button type="button" aria-label="Minimize chart" className="flex size-6 items-center justify-center bg-white"><svg viewBox="0 0 12 12" className="size-3"><path d="M1 9h9" stroke="#7b8896" strokeWidth="3" /></svg></button>
          <button type="button" aria-label="Restore chart" className="flex size-6 items-center justify-center bg-white"><svg viewBox="0 0 12 12" className="size-3" fill="none" stroke="#7b8896" strokeWidth="1.500"><path d="M4 4V1h7v6H8" /><path d="M1 5h7v6H1z" /><path d="M1 6h7" /></svg></button>
          <button type="button" aria-label="Close chart" className="flex size-6 items-center justify-center bg-white"><svg viewBox="0 0 12 12" className="size-3"><path d="M1 1l10 10M11 1 1 11" stroke="#7b8896" strokeWidth="3" /></svg></button>
        </div>
      </div>
      <div className="flex h-10 items-center">
        <div className="flex h-full items-center border-r border-b border-[#a8a8a8] pr-1">
          <div className="-ml-0.5 flex"><Grip /></div>
          <Tool icon="newChart" label="New chart" menu />
          <Tool icon="profiles" label="Profiles" menu />
          <Divider />
          <Tool icon="market" label="Market watch" />
          <Tool icon="target" label="Data window" />
          <Tool icon="navigator" label="Navigator" />
          <Tool icon="terminal" label="Terminal" />
          <Tool icon="tester" label="Strategy tester" />
          <Divider />
          <button type="button" className="flex h-8 w-[159px] shrink-0 items-center gap-0.5 pl-1.5">{icons.order}<span className="whitespace-nowrap">Nowe zlecenie</span></button>
          <Tool icon="book" label="MetaEditor" />
          <Tool icon="cloud" label="Market" />
          <Tool icon="signal" label="Signals" />
          <button type="button" className="ml-0.5 flex h-8 w-[142px] shrink-0 items-center gap-1.5 border-t border-l border-[#8a8a8a] bg-[#f9f9f9] pl-1">{icons.robot}<span>AutoTrading</span></button>
          <span className="ml-1 h-full w-px bg-[#9a9a9a]" />
          <Grip />
          <Tool icon="barChart" label="Bar chart" />
          <Tool icon="candles" label="Candlesticks" />
          <Tool icon="lineChart" label="Line chart" active />
          <Divider />
          <Tool icon="zoomIn" label="Zoom in" />
          <Tool icon="zoomOut" label="Zoom out" />
          <Tool icon="tile" label="Tile windows" />
          <Divider />
          <Tool icon="autoScroll" label="Auto scroll" active />
          <Tool icon="shift" label="Chart shift" active />
          <Divider />
          <Tool icon="indicator" label="Indicators" menu />
          <Tool icon="clock" label="Periods" menu />
          <Tool icon="template" label="Templates" menu />
        </div>
        <div className="ml-auto flex items-center gap-4 pr-2">
          <button type="button" aria-label="Search"><svg viewBox="0 0 22 22" className="size-6" fill="none"><path d="M2 20l8-8" stroke="#2f6fe0" strokeWidth="4" /><circle cx="14" cy="7" r="5.500" stroke="#2f63d0" strokeWidth="2" fill="#fff" /></svg></button>
          <button type="button" aria-label="Notifications" className="flex items-center">
            <svg viewBox="0 0 36 34" className="h-8 w-9"><path d="M3 20c0-5 5-8 11-8s11 3 11 8-5 8-11 8l-6 4 1-5c-4-1-6-4-6-7z" fill="#e6e6ea" stroke="#aaa" /><circle cx="23" cy="13" r="12.500" fill="#dd331c" /><text x="23" y="20" textAnchor="middle" fill="#fff" fontSize="19">1</text></svg>
          </button>
        </div>
      </div>
      <div className="flex h-10 items-center">
        <div className="-ml-1 flex"><Grip /></div>
        <Tool icon="cursor" label="Cursor" active />
        <Tool icon="cross" label="Crosshair" />
        <Divider />
        <Tool icon="vline" label="Vertical line" />
        <Tool icon="hline" label="Horizontal line" />
        <Tool icon="diagonal" label="Trend line" />
        <Tool icon="channel" label="Channel" />
        <Tool icon="fibo" label="Fibonacci" />
        <button type="button" className="w-[42px] text-xl font-semibold text-[#555]">A</button>
        <Tool icon="textBox" label="Text label" />
        <Tool icon="arrows" label="Arrows" menu />
        <span className="h-full w-px bg-[#a8a8a8]" />
        <Grip />
        {["M1", "M5", "M15", "M30", "H1", "H4", "D1", "W1", "MN"].map((t, i) => (
          <button type="button" key={t} className={`h-8 w-[42px] shrink-0 text-[15px] text-[#444] ${i === 0 ? "border-t border-l border-[#8a8a8a] bg-[#f9f9f9]" : ""}`}>{t}</button>
        ))}
        <span className="h-full w-px bg-[#a8a8a8]" />
      </div>
    </header>
  );
}

/* ----------------------------------------------------------------- chart */

const DownMark = ({ x, y }) => (
  <g>
    <circle cx={x} cy={y} r="32" fill="#fffafa" stroke="#dc143c" strokeWidth="8" />
    <path d={`M${x - 9} ${y - 32}h18v40h10l-19 22-19-22h10z`} fill="#dc143c" />
  </g>
);

function Plot() {
  return (
    <svg viewBox="8 154 2813 1503" preserveAspectRatio="none" className="col-start-1 row-start-1 h-full w-full" aria-label="XAUUSD M1 price chart">
      <defs>
        <pattern id="hatchBlue" width="6" height="19" patternUnits="userSpaceOnUse">
          <path d="M0 0h6v19H0z" fill="#12b4fb" />
          <path d="M0 4h3v12H0z" fill="#3aa0f2" />
        </pattern>
        <pattern id="hatchPink" width="6" height="19" patternUnits="userSpaceOnUse">
          <path d="M0 0h6v19H0z" fill="#ff00ff" />
          <path d="M0 4h2v12H0z" fill="#e400f2" />
        </pattern>
      </defs>

      <path d="M310 154V1657" stroke="#fff" strokeWidth="3" />
      <path d="M1165 1410 1418 786 1605 1026Z" fill="#00435f" />
      <path d="M0 938 802 420 1165 1410 2275 262" fill="none" stroke="#7c6843" strokeWidth="28" strokeLinejoin="round" />
      <path d="M850 508H1166" stroke="#ee82ee" strokeWidth="8" strokeLinecap="round" />
      <path d="M1195 1290H2277" stroke="#4169e1" strokeWidth="8" strokeLinecap="round" />
      <g fontFamily="'DejaVu Sans Mono', monospace" fontStyle="italic" fontSize="20">
        <text x="745" y="532" fill="#d070dc">INTRADAY ENTRY</text>
        <text x="1108" y="1314" fill="#3a5cd0">INTRADAY ENTRY</text>
      </g>
      <g shapeRendering="crispEdges">
        <path d={CLOUD.up} fill="#22382a" />
        <path d={CLOUD.down} fill="#40222b" />
      </g>

      {HIGHS.map(([x, y]) => <circle key={`h${x}`} cx={x} cy={y} r="16" fill="#ff4500" />)}
      {LOWS.map(([x, y]) => <circle key={`l${x}`} cx={x} cy={y} r="16" fill="#32cd32" />)}
      {BIG_HIGHS.map(([x, y]) => <circle key={`H${x}`} cx={x} cy={y} r="28" fill="#da70d6" />)}
      {BIG_LOWS.map(([x, y]) => <circle key={`L${x}`} cx={x} cy={y} r="28" fill="#00bfff" />)}

      <DownMark x={802} y={416} />
      <DownMark x={2275} y={264} />
      <path d="M1124 1367h83v84h-83z" fill="#a9a9a9" />
      <circle cx="1165" cy="1410" r="32" fill="#fffafa" stroke="#1e90ff" strokeWidth="8" />
      <path d="M1156 1442v-40h-10l19-22 19 22h-10v40z" fill="#1e90ff" />

      <g shapeRendering="crispEdges">
        {["w", "o", "g"].map((t) => <path key={t} d={BARS.paths[t]} fill={COLORS[t]} />)}
        <path d={BARS.sparks} fill="#ffa500" />
      </g>

      {AVERAGES.map((line, i) => (
        <g key={i} fill="none" strokeLinecap="round" strokeLinejoin="round">
          {line.map((s, k) => <path key={`b${k}`} d={s.d} stroke="#6a6a60" strokeWidth="9" />)}
          {line.map((s, k) => <path key={`t${k}`} d={s.d} stroke={MA_COLORS[s.tone]} strokeWidth="7" />)}
        </g>
      ))}

      <path d="M302 587h549v19H302zM857 587h117v19H857zM2223 587h61v19h-61z" fill="url(#hatchBlue)" />
      <path d="M851 587h6v19h-6zM974 587h1249v19H974z" fill="url(#hatchPink)" />
      <path d="M540 591h25v11h-25zM838 591h13v11h-13zM857 591h14v11h-14zM958 591h16v11h-16z" fill="#6070e8" />

      <g fill="none">
        <path d="M8 1138H308V154" stroke="#32cd32" strokeWidth="3" />
        <path d="M310 284H2821" stroke="#0bbb4f" strokeWidth="3" />
        <path d="M8 316H2821" stroke="#e6e6e6" strokeWidth="2" />
        <path d="M310 909H2821" stroke="#f28500" strokeWidth="3" />
        <path d="M490 417H2095V1412H490Z" stroke="#f28500" strokeWidth="3" />
        <path d="M2821 266H1930V1004H2821" stroke="#1e90ff" strokeWidth="3" />
        <path d="M1607 1027h17M1624 1010h109v35h-109z" stroke="#fff" strokeWidth="2" />
      </g>
      <path d="M38 454h17v37H38zM2693 513h37v19h-37z" fill="#f4a460" />
    </svg>
  );
}

// Text pinned to a spot on the price canvas (percent of its width and height)
const PINS = [
  { t: "Buy/Pivot", x: 2549, y: 301, c: "text-[#0bbb4f]" },
  { t: "OPEN UP", x: 2549, y: 614, c: "text-[#0bbb4f]" },
  { t: "Sell/Pivot", x: 2549, y: 927, c: "text-[#f28500]" },
  { t: "23.6%", x: 2550, y: 1106, c: "text-[#f28500]" },
  { t: "38.2%", x: 2550, y: 1411, c: "text-[#f28500]" },
  { t: "50.0%", x: 2550, y: 1656, c: "text-[#f28500]" },
];
const pin = (x, y) => ({ left: `${((x - 8) / 2813) * 100}%`, top: `${((y - 154) / 1503) * 100}%` });

const BLACK = "font-['DejaVu_Sans','Inter',sans-serif] font-bold [-webkit-text-stroke:1px_currentColor]";

const Clock = ({ city, time, tone }) => (
  <span className={`flex h-[23px] items-center justify-center gap-3 text-[22px] leading-6 font-bold whitespace-nowrap text-white ${tone}`}>
    <span>{city}</span>
    <span>{time}</span>
  </span>
);

function PlotOverlay() {
  return (
    <div className="relative col-start-1 row-start-1 flex min-h-0 flex-col overflow-hidden font-['Liberation_Sans',Arial,sans-serif]">
      {PINS.map((p) => (
        <span key={p.t} style={pin(p.x, p.y)} className={`absolute -translate-x-1/2 -translate-y-1/2 font-['DejaVu_Sans_Mono','Liberation_Mono',monospace] text-2xl leading-7 font-bold ${p.c}`}>{p.t}</span>
      ))}
      <span style={pin(1678, 1028)} className="absolute -translate-x-1/2 -translate-y-1/2 font-['Open_Sans',sans-serif] text-[28px] leading-8 text-white">2495.87</span>
      <svg viewBox="0 0 14 8" style={pin(2279, 154)} className="absolute z-10 h-2 w-3.5 -translate-x-1/2" aria-hidden="true"><path d="M0 0h14L7 8z" fill="#fff" /></svg>

      <div className="flex items-start pt-[3px]">
        <span className="flex w-[116px] items-center gap-1 pl-1 font-['Open_Sans',sans-serif] text-[15px] leading-4 text-[#a0a0a0]">
          <svg viewBox="0 0 10 8" className="h-2 w-2.5 shrink-0"><path d="M0 0h10L5 8z" fill="#b0b0b0" /></svg>
          XAUUSD,M1
        </span>
        <div className="flex gap-1">
          <div className="flex w-[232px] flex-col"><Clock city="HONG KONG" time="16:55" tone="bg-[#0675d8]" /></div>
          <div className="flex w-[198px] flex-col"><Clock city="LONDON" time="09:55" tone="bg-[#0675d8]" /></div>
          <div className="flex w-[224px] flex-col"><Clock city="NEW YORK" time="04:55" tone="bg-[#9a2222]" /></div>
        </div>
        <div className={`ml-5 flex h-[30px] w-[660px] items-center bg-[#32cd32] pl-2.5 text-3xl leading-7 whitespace-nowrap text-[#1f3038] ${BLACK}`}>Price is Above the Daily Open Line</div>
        <button type="button" className="ml-5 h-8 w-[210px] rounded-xs bg-[#dc143c] text-[26px] leading-7 font-bold whitespace-nowrap text-white">Auto-Scroll ON</button>
        <div className="ml-4 flex h-[29px] w-[932px] items-center bg-[#324b78] text-lg leading-6 text-[#c8d0e0] italic">
          <span className="flex-1 pl-[70px] text-center">news reader</span>
          <button type="button" aria-label="Collapse" className="flex h-full w-8 items-center justify-center bg-[#34508a]"><svg viewBox="0 0 12 8" className="h-2 w-3"><path d="M0 8 6 0l6 8z" fill="#fff" /></svg></button>
          <button type="button" aria-label="Close news" className="flex h-full w-9 items-center justify-center bg-[#34508a]"><svg viewBox="0 0 20 18" className="h-[18px] w-5" fill="none" stroke="#fff" strokeWidth="2"><rect x="1" y="1" width="18" height="16" /><path d="M6 5l8 8M14 5l-8 8" /></svg></button>
        </div>
      </div>

      <div className="ml-[174px] flex w-[520px] flex-col items-end text-[#32cd32]">
        <h1 className="font-['DejaVu_Sans','Inter',sans-serif] text-[78px] leading-[80px] font-bold whitespace-nowrap [-webkit-text-stroke:3px_currentColor] [text-shadow:2px_2px_0_#000]">XAUUSD M1</h1>
        <p className="-mt-3 font-['DejaVu_Sans','Inter',sans-serif] text-[27px] leading-8 font-bold whitespace-nowrap text-[#337a3d]">Carlsberg Don't Do Charts</p>
      </div>

      <div className="mt-auto flex flex-col">
        <div className="ml-2 flex items-center gap-3.5">
          <button type="button" className="h-9 w-[58px] rounded-xs border-2 border-[#6a6a6a] bg-[#141516] text-xl leading-6 text-[#777]">ON</button>
          <h2 className={`text-3xl leading-9 whitespace-nowrap text-[#32cd32] ${BLACK} [text-shadow:2px_2px_0_#000]`}>XU WINNER WINNER CHICKEN DINNER Edition</h2>
        </div>
        <div className="mt-3 mb-1 flex items-center">
          <button type="button" className={`h-9 w-[242px] bg-[#006400] pr-2 text-3xl leading-8 text-white ${BLACK}`}>UP SQUARE</button>
          <button type="button" className={`ml-4 h-9 w-[242px] bg-[#850000] text-3xl leading-8 text-white ${BLACK}`}>DN ARROW</button>
          <button type="button" className={`ml-2 h-9 w-[114px] rounded-xs bg-[#917c56] text-[28px] leading-8 text-[#23282c] ${BLACK}`}>VWAP</button>
          <span className={`ml-3 text-[29px] leading-8 whitespace-nowrap text-[#917c56] ${BLACK}`}>COMPOUND INTEREST</span>
          <span className="ml-2.5 text-[28px] leading-8 whitespace-nowrap text-white">'He who understands it, earns it... He who does not, pays it'.</span>
        </div>
      </div>
    </div>
  );
}

const IMPACT = "text-center font-['Roboto','Liberation_Sans',sans-serif] font-black";
const MONO = "font-['DejaVu_Sans_Mono','Liberation_Mono',monospace]";

function SidePanels() {
  return (
    <aside className="flex w-44 shrink-0 flex-col items-end justify-between bg-[#23402a] pt-6 pr-3.5 pb-5">
      <section className="flex w-[142px] flex-col border-2 border-[#d8d8d8] bg-[#1e2630] pt-1.5 pb-1 text-[#c0c0c0]">
        <h3 className={`text-[30px] leading-[34px] text-white ${IMPACT}`}>XAUUSD</h3>
        <p className={`text-[32px] leading-[34px] text-[#32cd32] ${IMPACT}`}>2506.6</p>
        <p className={`text-center text-[22px] leading-6 font-bold ${MONO}`}>SPD:0.7</p>
        <p className={`pr-4 text-right text-2xl leading-6 font-bold text-[#00ff00] ${MONO}`}>0:6</p>
        <p className={`text-center text-xl leading-[22px] ${MONO}`}>DAILY OPEN</p>
        <p className={`text-center text-[28px] leading-7 ${MONO}`}>2502.3</p>
        <dl className={`px-1.5 text-2xl leading-6 ${MONO}`}>
          <div className="flex justify-between text-[#32cd32]"><dt>PFO</dt><dd>42</dd></div>
          <div className="flex justify-between"><dt>HiLo</dt><dd>173</dd></div>
          <div className="flex justify-between"><dt>Avg</dt><dd>314</dd></div>
        </dl>
        <p className={`mt-1 pr-3 text-right text-[29px] leading-8 text-[#32cd32] ${BLACK}`}>95.71</p>
        <div className="mt-2 flex justify-between px-2 font-['Liberation_Sans',sans-serif]">
          {["M1", "M5", "15"].map((t) => (
            <button type="button" key={t} className="size-9 bg-[#008000] text-[22px] text-white">{t}</button>
          ))}
        </div>
        <p className={`mt-1.5 pr-2 text-right text-[29px] leading-8 text-[#32cd32] ${BLACK}`}>13%</p>
      </section>
      <section className="flex w-[142px] flex-col border-2 border-[#d8d8d8] bg-[#1e2630] pt-2.5 pb-2 text-right font-['Liberation_Sans',Arial,sans-serif] text-[#808080]">
        <h3 className={`text-[30px] leading-9 text-white ${IMPACT}`}>XAUUSD</h3>
        <p className="pr-1 text-[28px] leading-12">OpenPips</p>
        <p className="pr-2 font-['Roboto',sans-serif] text-4xl leading-8 font-light">0.00</p>
        <p className="mt-2 pr-1 text-[28px] leading-10">OpenPos</p>
        <p className="pr-1 font-['Roboto',sans-serif] text-[30px] leading-8 font-light">0.00%</p>
        <p className="mt-1.5 pr-2 text-[28px] leading-9">Daily P/L</p>
        <p className="pr-1 font-['Roboto',sans-serif] text-[30px] leading-8 text-[#00ffff]">8.65%</p>
      </section>
    </aside>
  );
}

function PriceAxis() {
  return (
    <div className="relative flex w-[67px] shrink-0 flex-col justify-between border-l-2 border-[#a0a0a0] font-['Open_Sans',sans-serif] text-sm leading-3 text-[#a0a0a0]">
      {PRICE_LABELS.map((p) => (
        <span key={p} className="flex items-center gap-1"><i className="h-0.5 w-1 bg-[#a0a0a0]" />{p}</span>
      ))}
      <span className="absolute top-[154px] left-px w-[61px] bg-[#a9a9a9] pl-1.5 leading-4 text-[#202428]">2506.58</span>
    </div>
  );
}

export default function App() {
  return (
    <div className="flex h-screen min-h-[900px] flex-col overflow-hidden bg-[#f0f0f0]">
      <Header />
      <main className="flex min-h-0 flex-1 flex-col border-t-2 border-r-4 border-l-2 border-t-[#808080] border-r-[#f0f0f0] border-l-[#808080] bg-[#23282c] pt-0.5 pl-1">
        <div className="flex min-h-0 flex-1 border-t-2 border-b-2 border-l-2 border-[#a0a0a0]">
          <div className="grid min-h-0 min-w-0 flex-1 grid-cols-[minmax(0,1fr)] grid-rows-[minmax(0,1fr)]">
            <Plot />
            <PlotOverlay />
          </div>
          <SidePanels />
          <div className="w-1 shrink-0" />
          <PriceAxis />
        </div>
        <div className="mt-0.5 flex h-[91px] shrink-0 border-t-2 border-l-2 border-[#a0a0a0]">
          <div className="flex-1 border-b-2 border-[#a0a0a0]">
            <svg viewBox="8 0 2993 87" preserveAspectRatio="none" className="h-full w-full" aria-label="Trend strip">
              <path d="M8 0H2277V86H8z" fill="#283642" />
              {TREND.map((s) => <rect key={s.x} x={s.x} y="0" width={s.w} height="86" fill={s.tone === "g" ? "#206433" : "#6e3e20"} />)}
            </svg>
          </div>
          <div className="flex w-[67px] flex-col justify-between border-l-2 border-[#a0a0a0] py-1 pl-1 font-['Open_Sans',sans-serif] text-sm leading-4 text-[#a0a0a0]">
            <span>0</span>
            <span>0</span>
          </div>
        </div>
        <div className="flex h-7 shrink-0 pl-0.5 font-['Open_Sans',sans-serif] text-sm leading-5 whitespace-nowrap text-[#a0a0a0]">
          {TIME_LABELS.map((t) => (
            <span key={t} className="flex w-24 shrink-0 flex-col">
              <i className="h-1 w-0.5 bg-[#a0a0a0]" />
              <span className="-ml-0.5">{t}</span>
            </span>
          ))}
        </div>
      </main>
    </div>
  );
}
